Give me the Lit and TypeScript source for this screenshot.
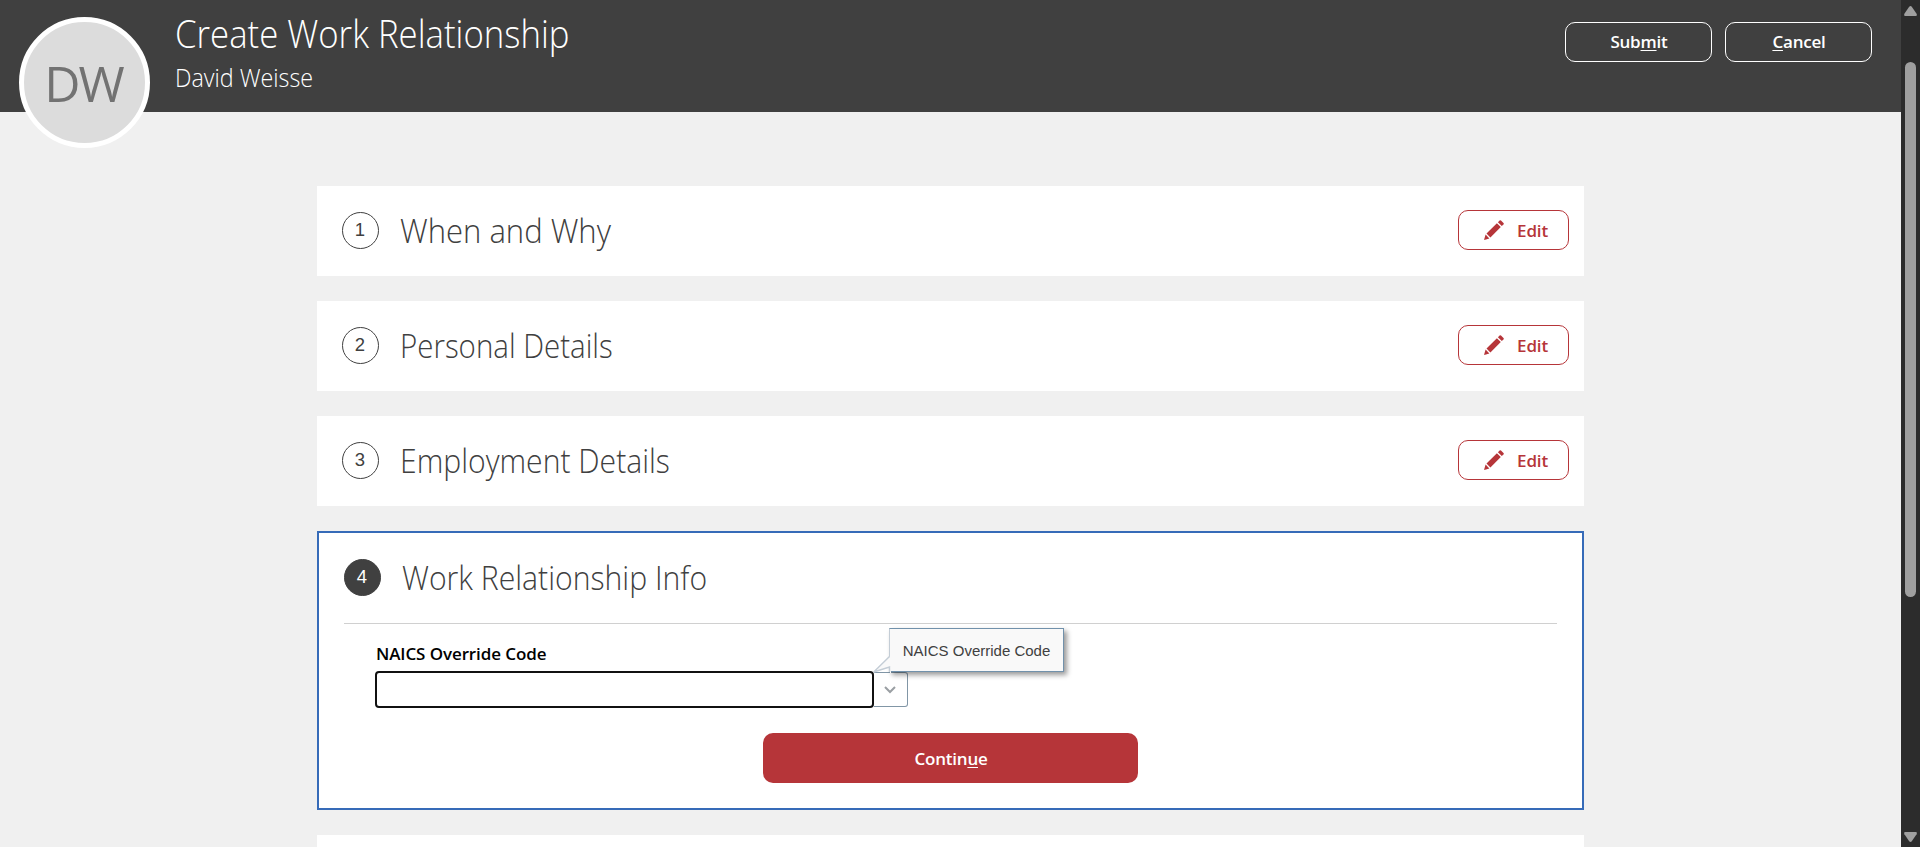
import { LitElement, html, css, svg } from "lit";
import { customElement, property } from "lit/decorators.js";

const pencil = svg`<path d="M0 20 1.6 14.6 5.4 18.4Z M2.5 13.6 12.9 3.2 16.8 7.1 6.4 17.5Z M13.9 2.2 15.6.5Q16.3-.1 17 .5L19.5 3Q20.1 3.7 19.5 4.4L17.8 6.1Z"/>`;

@customElement("step-card")
class StepCard extends LitElement {
  @property({ type: Number }) step = 1;
  @property() heading = "";
  @property({ type: Boolean, reflect: true }) active = false;

  static styles = css`
    :host { display: block; box-sizing: border-box; height: 90px; background: #fff; padding: 0 15px 0 25px; }
    :host([active]) { height: 279px; border: 2px solid #366bb8; padding: 0 25px; }
    .row { display: flex; align-items: center; height: 90px; }
    .num { box-sizing: border-box; width: 37px; height: 37px; margin-bottom: 1px; padding-right: 1px; border: 1px solid #404040; border-radius: 50%;
      display: flex; align-items: center; justify-content: center; font: 18.5px/1 "Liberation Sans", Arial, sans-serif; color: #404040; }
    :host([active]) .num { background: #404040; color: #fff; }
    .title { flex: 1; margin: 0 0 0 21px; color: #404040; font: 300 33px/46px "Open Sans", sans-serif; white-space: nowrap; }
    .title span { display: inline-block; transform-origin: 0 50%; }
    .t1 span { transform: scaleX(.94); } .t2 span { transform: scaleX(.893); } .t3 span { transform: scaleX(.913); } .t4 span { transform: scaleX(.914); }
    .edit { box-sizing: border-box; width: 111px; height: 40px; margin-bottom: 2px; border: 1px solid #b63539; border-radius: 10px; background: #fff;
      display: flex; align-items: center; padding: 0 0 0 25px; gap: 13px; color: #b63539; font: 600 17px/24px "Open Sans", sans-serif; letter-spacing: -0.1px; }
    .edit span { padding-top: 1px; }
    .edit svg { display: block; fill: #b63539; }
  `;

  render() {
    return html`
      <div class="row">
        <span class="num">${this.step}</span>
        <h2 class="title t${this.step}"><span>${this.heading}</span></h2>
        ${this.active ? "" : html`<button class="edit"><svg width="20" height="20" viewBox="0 0 20 20">${pencil}</svg><span>Edit</span></button>`}
      </div>
      <slot></slot>`;
  }
}

@customElement("app-root")
class AppRoot extends LitElement {
  static styles = css`
    :host { display: grid; grid-template-columns: 1fr 19px; height: 847px; overflow: hidden; background: #f0f0f0; font-family: "Open Sans", sans-serif; }
    .page { display: flex; flex-direction: column; min-width: 0; height: 847px; overflow: hidden; }
    .header { box-sizing: border-box; flex: none; display: flex; height: 112px; background: #404040; color: #fff; padding: 0 29px 0 19px; }
    .avatar { box-sizing: border-box; flex: none; width: 131px; height: 131px; margin: 17px 25px 0 0; padding: 1px 2px 0 0; border: 5px solid #fff; border-radius: 50%;
      background: #dcdcdc; color: #727272; display: flex; align-items: center; justify-content: center; font-size: 50px; line-height: 1; letter-spacing: -2px; }
    .names { flex: 1; padding-top: 8px; white-space: nowrap; }
    .names span { display: inline-block; transform-origin: 0 50%; }
    .h1 { margin: 0; font-weight: 300; font-size: 38px; line-height: 50px; }
    .h1 span { transform: scaleX(.914); }
    .sub { font-weight: 300; font-size: 25px; line-height: 34px; margin-top: 2px; }
    .sub span { transform: scaleX(.932); }
    .actions { display: flex; gap: 13px; padding-top: 22px; }
    .btn { box-sizing: border-box; width: 147px; height: 40px; border: 1px solid #fff; border-radius: 10px; background: none; color: #fff;
      font: 600 17px/24px "Open Sans", sans-serif; padding: 0 0 0 1px; letter-spacing: -0.2px; }
    u { text-underline-offset: 2px; text-decoration-thickness: 1px; text-decoration-skip-ink: none; }
    .steps { display: flex; flex-direction: column; gap: 25px; padding: 74px 317px 0; }
    .body { border-top: 1px solid #d0d0d0; }
    .field { position: relative; padding: 17px 0 0 31px; }
    .label { display: block; padding-left: 1px; height: 30px; font-weight: 600; font-size: 17px; line-height: 26px; color: #000; white-space: nowrap; letter-spacing: -0.1px; }
    .combo { display: flex; align-items: center; height: 37px; }
    .input { box-sizing: border-box; width: 499px; height: 37px; border: 2px solid #111; border-radius: 4px; background: #fff; padding: 0 8px; outline: none; }
    .drop { box-sizing: border-box; width: 34px; height: 35px; padding: 1px 2px 0 0; border: 1px solid #8196a6; border-left: 0; border-radius: 0 3px 3px 0; display: flex; align-items: center; justify-content: center; }
    .tip { position: absolute; left: 545px; top: 4px; box-sizing: border-box; width: 175px; height: 44px; padding-top: 2px; border: 1px solid #7191ab; border-left-color: #c4cdd6;
      background: #f9f9f9; box-shadow: 3px 3px 5px rgba(0,0,0,.4); display: flex; align-items: center; justify-content: center; color: #404040; font: 15px/20px "Liberation Sans", Arial, sans-serif; white-space: nowrap; }
    .tail { position: absolute; left: -17px; top: 27px; }
    .foot { display: flex; justify-content: center; padding-top: 25px; }
    .continue { width: 375px; height: 50px; border: 0; border-radius: 10px; background: #b63539; color: #fff; font: 600 17px/24px "Open Sans", sans-serif; padding: 2px 0 0 1px; letter-spacing: -0.2px; }
    .next { height: 90px; background: #fff; }
    .scroll { display: flex; flex-direction: column; align-items: center; padding: 6px 1px 5px 1px; background: #2c2c2c; box-sizing: border-box; height: 847px; }
    .scroll svg { display: block; flex: none; fill: #9f9f9f; }
    .thumb { width: 11px; height: 535px; margin-top: 46px; border-radius: 6px; background: #9f9f9f; flex: none; }
    .space { flex: 1; }
  `;

  render() {
    return html`
      <div class="page">
        <header class="header">
          <div class="avatar"><span>DW</span></div>
          <div class="names"><h1 class="h1"><span>Create Work Relationship</span></h1><div class="sub"><span>David Weisse</span></div></div>
          <div class="actions">
            <button class="btn">Sub<u>m</u>it</button>
            <button class="btn"><u>C</u>ancel</button>
          </div>
        </header>
        <main class="steps">
          <step-card step="1" heading="When and Why"></step-card>
          <step-card step="2" heading="Personal Details"></step-card>
          <step-card step="3" heading="Employment Details"></step-card>
          <step-card step="4" heading="Work Relationship Info" active>
            <div class="body">
              <div class="field">
                <label class="label">NAICS Override Code</label>
                <div class="combo">
                  <input class="input" />
                  <span class="drop"><svg width="12" height="8" viewBox="0 0 12 8" fill="none" stroke="#9a9fa3" stroke-width="2"><path d="M1 1 6 6 11 1"/></svg></span>
                </div>
                <div class="tip">
                  <svg class="tail" width="18" height="18" viewBox="0 0 18 18"><path d="M17 .5.7 16 16.5 11 17 17H18V.5Z" fill="#f9f9f9"/><path d="M16.5.5.7 16 16.5 11V16" fill="none" stroke="#c4cdd6" stroke-width="1.4"/></svg>
                  NAICS Override Code
                </div>
              </div>
              <div class="foot"><button class="continue">Contin<u>u</u>e</button></div>
            </div>
          </step-card>
          <div class="next"></div>
        </main>
      </div>
      <aside class="scroll">
        <svg width="13" height="10" viewBox="0 0 13 10"><path d="M5.2.8Q6.5-.7 7.8.8L12.6 7.8Q13.4 10 11.8 10H1.2Q-.4 10 .4 7.8Z"/></svg>
        <div class="thumb"></div>
        <div class="space"></div>
        <svg width="13" height="10" viewBox="0 0 13 10"><path d="M5.2 9.2Q6.5 10.7 7.8 9.2L12.6 2.2Q13.4 0 11.8 0H1.2Q-.4 0 .4 2.2Z"/></svg>
      </aside>`;
  }
}
